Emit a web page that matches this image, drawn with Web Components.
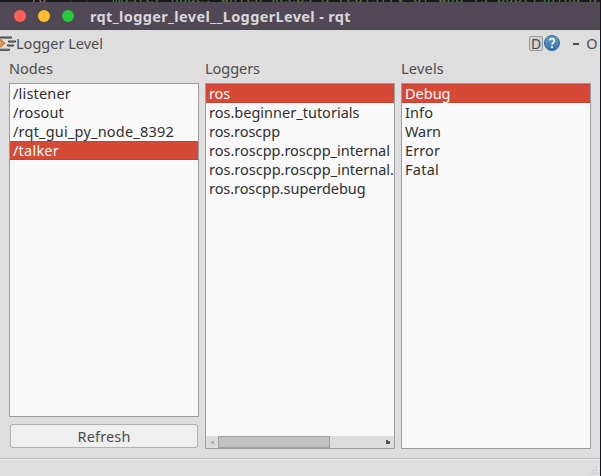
<!DOCTYPE html>
<html lang="en"><head><meta charset="utf-8"><title>rqt_logger_level__LoggerLevel - rqt</title>
<style>
html,body{margin:0;width:601px;height:476px;overflow:hidden;background:#16141a}
body{font:14.5px/19px "Noto Sans","Open Sans",sans-serif;color:#4c4c4c}
</style></head><body>
<rqt-window></rqt-window>
<script>
// Single-line label whose tracking is set so that the text takes its "w" width.
class FitText extends HTMLElement{
  connectedCallback(){
    const r=this.attachShadow({mode:'open'});
    r.innerHTML='<style>:host{display:inline-block;white-space:pre}span{display:inline-block}</style><span><slot></slot></span>';
    const w=parseFloat(this.getAttribute('w')), s=r.querySelector('span');
    const n=this.textContent.length;
    if(w&&n>1) s.style.letterSpacing=((w-s.getBoundingClientRect().width)/n).toFixed(3)+'px';
  }
}
class EditorStrip extends HTMLElement{
  connectedCallback(){
    this.attachShadow({mode:'open'}).innerHTML=`<style>
    :host{display:flex;height:2px;overflow:hidden;background:#191a17;font:13.9px/16px "DejaVu Sans Mono",monospace;color:#557f40;align-items:flex-end}
    .n{color:#777;width:40px;padding-left:30px;box-sizing:content-box;border-right:1px solid #3b3b38}
    .g{width:16px;border-right:1px solid #3b3b38}span{height:16px;flex:none;margin-bottom:-4px;box-sizing:border-box}
    .t{padding-left:25px;white-space:pre}</style><span class="n">70</span><span class="g"></span><span class="t">master node, which keeps a registry of who is publishing a</span>`;
  }
}
class TitleBar extends HTMLElement{
  connectedCallback(){
    this.attachShadow({mode:'open'}).innerHTML=`<style>
    :host{display:flex;align-items:center;box-sizing:border-box;height:28px;padding:0 0 0 14px;gap:12px;background:#504955;color:#dad7dc;font-weight:700;font-size:14.5px}
    i{width:12px;height:12px;border-radius:50%;flex:none}.r{background:#ff5f57}.y{background:#febc2e}.g{background:#28c840}
    fit-text{margin-left:4px}</style><i class="r"></i><i class="y"></i><i class="g"></i><fit-text w="261">rqt_logger_level__LoggerLevel - rqt</fit-text>`;
  }
}
class DockHeader extends HTMLElement{
  connectedCallback(){
    this.attachShadow({mode:'open'}).innerHTML=`<style>
    :host{display:flex;height:28px;align-items:center;box-sizing:border-box;padding-bottom:2px}svg{display:block;flex:none}
    .s{flex:1}.d{box-sizing:border-box;width:14px;height:15px;border:1px solid #999;border-radius:2px;background:#d2d2d2;text-align:center;line-height:14px;font-size:14px}
    .q{margin-left:1px}.m{margin-left:13px;width:6px;height:2px;background:#4c4c4c;margin-top:2px}.o{margin:0 2px 0 7px;width:12px;text-align:center}
    </style>
    <svg width="16" height="17" viewBox="0 0 16 17"><path d="M0 4.5L4.4 8.2L0 12" fill="none" stroke="#e27a25" stroke-width="1.7"/><path d="M0 6.3L2.2 8.2L0 10.2" fill="none" stroke="#e27a25" stroke-width="1.2"/>
    <g stroke="#292929" stroke-width="2" stroke-linecap="round"><path d="M1 2.5H11M9 6.5H15M8 10.5H13M1 14.7H9"/></g><g stroke="#aaa" stroke-width=".7"><path d="M1 2.1H11M9 6.1H15M8 10.1H13M1 14.3H9"/></g></svg>
    <fit-text w="87">Logger Level</fit-text><span class="s"></span><span class="d">D</span>
    <svg class="q" width="16" height="16" viewBox="0 0 16 16"><defs><linearGradient id="b" x2="0" y2="1"><stop stop-color="#6aa2d2"/><stop offset="1" stop-color="#2e6fab"/></linearGradient></defs><circle cx="8" cy="8" r="7.5" fill="url(#b)" stroke="#29639c"/><path d="M5.5 5.2C6.2 3.2 10.4 3.3 10.3 5.8C10.2 7.6 8 7.7 8 9.8" fill="none" stroke="#fff" stroke-width="1.7"/><circle cx="8" cy="12.1" r="1.1" fill="#fff"/></svg>
    <span class="m"></span><span class="o">O</span>`;
  }
}
class ListPane extends HTMLElement{
  connectedCallback(){
    const sel=+this.getAttribute('selected');
    const rows=this.getAttribute('items').split(' ').map((t,i)=>{const[a,w]=t.split('=');return `<div class="row${i===sel?' sel':''}"><fit-text w="${w}">${a}</fit-text></div>`}).join('');
    this.attachShadow({mode:'open'}).innerHTML=`<style>
    :host{display:flex;flex-direction:column;width:190px;flex:none}
    .h{height:25px;padding-top:1px;box-sizing:border-box}
    .box{flex:1;box-sizing:border-box;border:1px solid #9d9d9d;background:#f9f9f9;display:flex;flex-direction:column;color:#303030}
    .rows{flex:1;overflow:hidden}.row{height:19px;line-height:18px;padding-left:3px;box-sizing:border-box;overflow:hidden;white-space:nowrap}
    .sel{background:#d64937;color:#fff;box-shadow:inset 0 1px #c8402f,inset 0 -1px #c8402f}</style>
    <div class="h"><fit-text w="${this.getAttribute('hw')}">${this.getAttribute('label')}</fit-text></div>
    <div class="box"><div class="rows">${rows}</div><slot></slot></div>`;
  }
}
class ScrollBar extends HTMLElement{
  connectedCallback(){
    this.attachShadow({mode:'open'}).innerHTML=`<style>:host{display:flex;height:12px;background:#dcdcdc;flex:none}
    .l{width:12px;flex:none}.t{width:112px;box-sizing:border-box;border:1px solid #a0a0a0;background:#c1c1c1}.s{flex:1}svg{display:block}</style>
    <svg class="l" width="12" height="12"><path d="M8 4.5V8.5L4 6.5Z" fill="#aaa"/></svg><span class="t"></span><span class="s"></span>
    <svg width="12" height="12"><path d="M4 4H6V5H8V8H4Z" fill="#555"/></svg>`;
  }
}
class PushButton extends HTMLElement{
  connectedCallback(){
    this.attachShadow({mode:'open'}).innerHTML=`<style>:host{display:flex;align-items:center;justify-content:center;box-sizing:border-box;height:24px;margin:7px 1px 1px;border:1px solid #b1b1b1;border-radius:2px;background:#efefef;padding-top:1px}</style><slot></slot>`;
  }
}
class StatusBar extends HTMLElement{
  connectedCallback(){
    let d='';for(const[x,y]of[[9,1],[6,4],[9,4],[3,7],[6,7],[9,7]])d+=`<rect x="${x+.7}" y="${y+.7}" width="1" height="1" fill="#f5f5f5"/><rect x="${x}" y="${y}" width="1" height="1" fill="#aaa"/>`;
    this.attachShadow({mode:'open'}).innerHTML=`<style>:host{display:flex;box-sizing:border-box;height:18px;border-top:1px solid #b9b9b9;box-shadow:inset 0 1px #eee;justify-content:flex-end;align-items:flex-end}svg{display:block;margin-right:1px}</style><svg width="12" height="10">${d}</svg>`;
  }
}
class RqtWindow extends HTMLElement{
  connectedCallback(){
    this.attachShadow({mode:'open'}).innerHTML=`<style>:host{display:flex;flex-direction:column;width:600px;height:476px;background:#dedede}
    main{display:flex;gap:6px;height:391px;padding-left:9px;box-sizing:border-box}
    .col{display:flex;flex-direction:column;width:190px}.col list-pane{flex:1}.sp{flex:1}</style>
    <editor-strip></editor-strip><title-bar></title-bar><dock-header></dock-header>
    <main><div class="col"><list-pane label="Nodes" hw="44" selected="3" items="/listener=58 /rosout=51 /rqt_gui_py_node_8392=161 /talker=46"></list-pane><push-button><fit-text w="53">Refresh</fit-text></push-button></div>
    <list-pane label="Loggers" hw="55" selected="0" items="ros=21 ros.beginner_tutorials=150.5 ros.roscpp=71 ros.roscpp.roscpp_internal=181 ros.roscpp.roscpp_internal.=185 ros.roscpp.superdebug=156.5"><scroll-bar></scroll-bar></list-pane>
    <list-pane label="Levels" hw="43" selected="0" items="Debug=45.5 Info=28 Warn=36 Error=35 Fatal=34"></list-pane></main>
    <span class="sp"></span><status-bar></status-bar>`;
  }
}
customElements.define('fit-text',FitText);
customElements.define('editor-strip',EditorStrip);
customElements.define('title-bar',TitleBar);
customElements.define('dock-header',DockHeader);
customElements.define('scroll-bar',ScrollBar);
customElements.define('list-pane',ListPane);
customElements.define('push-button',PushButton);
customElements.define('status-bar',StatusBar);
customElements.define('rqt-window',RqtWindow);
</script></body></html>
